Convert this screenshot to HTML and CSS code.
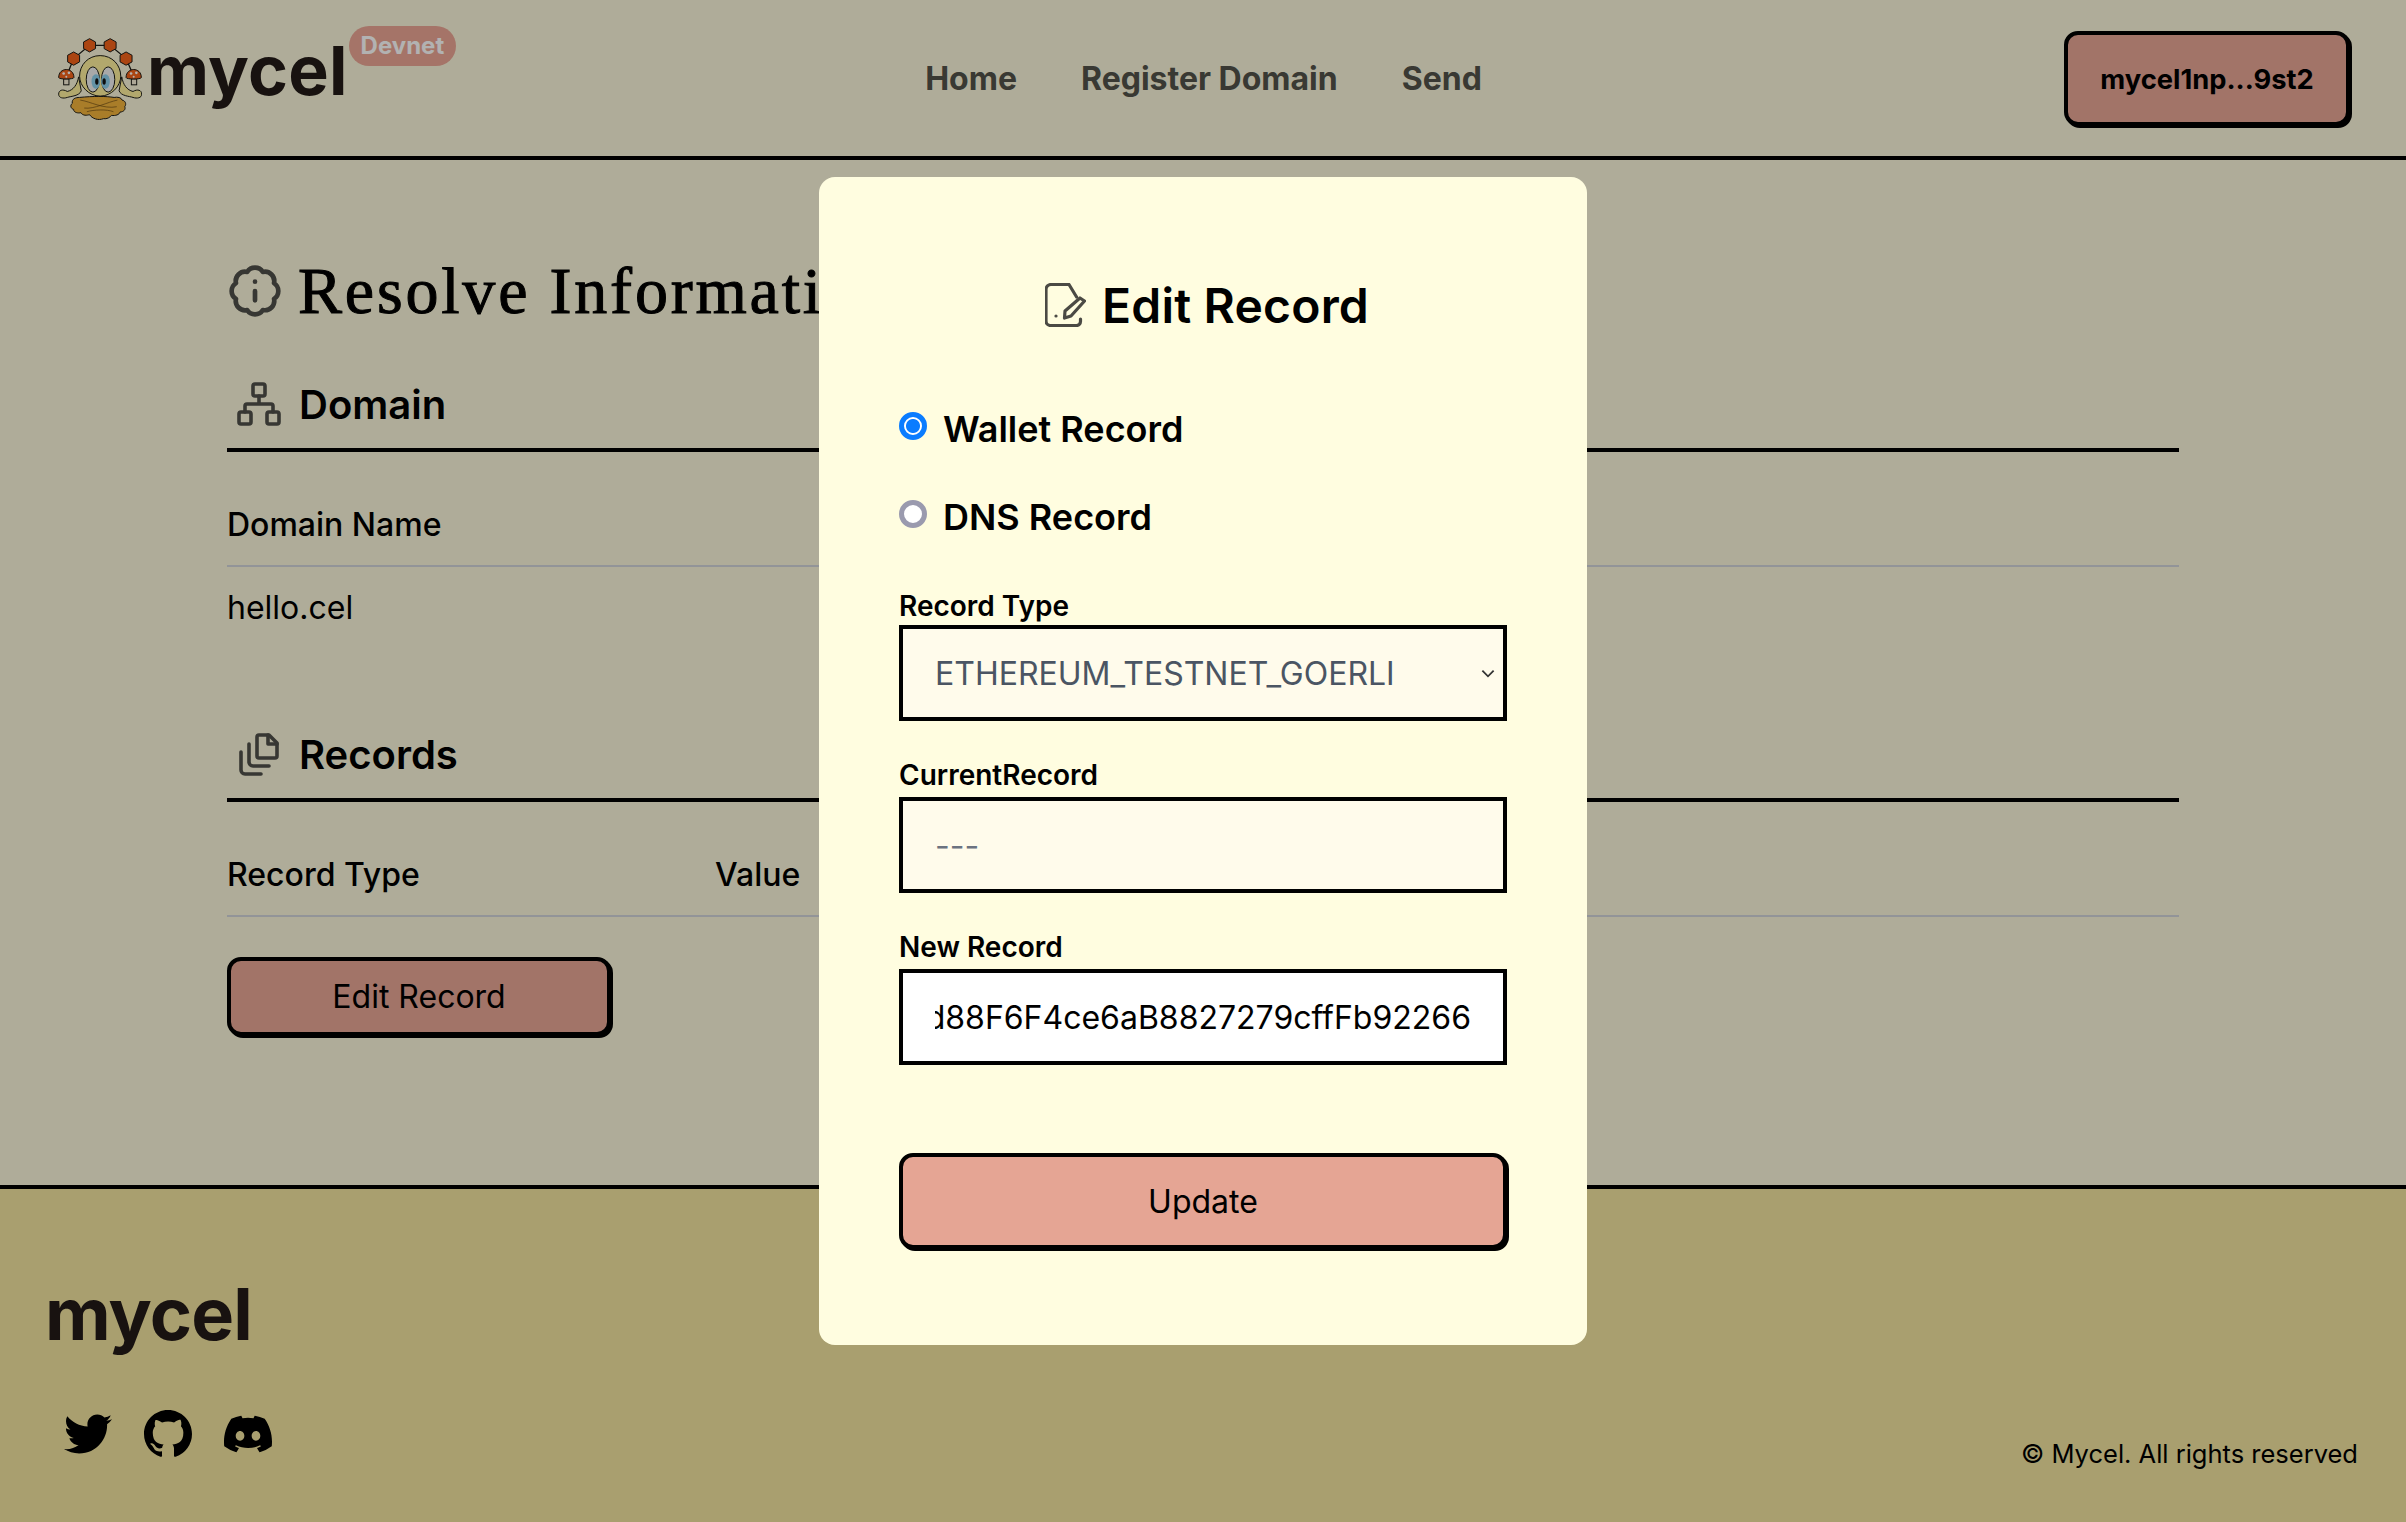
FILE: index.html
```html
<!DOCTYPE html>
<html lang="en">
<head>
<meta charset="utf-8">
<title>Mycel</title>
<link rel="stylesheet" href="styles.css">
</head>
<body>
<header class="site-header">
  <a class="brand" href="#">
    <svg class="mascot" viewBox="50 50 256 256" aria-hidden="true">
      <path class="m-line" d="M80 165 100 115 148 75H210L258 115 280 165"/>
      <g class="m-hex">
        <path d="M148 55l18 10v20l-18 10-18-10V65z"/>
        <path d="M210 55l18 10v20l-18 10-18-10V65z"/>
        <path d="M100 95l18 10v20l-18 10-18-10v-20z"/>
        <path d="M258 95l18 10v20l-18 10-18-10v-20z"/>
      </g>
      <path class="m-body" d="M118 232c-12 0-24 4-22 18-8 6-4 16 4 18 0 10 14 12 22 10 6 10 18 8 26 6 8 12 26 18 42 12 10 2 20-4 24-10 12 2 24-2 26-10 10 0 18-8 14-16 6-8 2-18-8-20-2-8-14-10-24-8-24-4-64-4-104 0z"/>
      <path class="m-thin" d="M120 240c30 4 70 28 110 20M232 240c-30 6-70 28-100 24M140 275c20-6 60-8 80 0"/>
      <path class="m-skin" d="M115 170c-4 24-16 40-34 44-14-8-26-4-26 8s14 14 26 10 36-4 42-20zM245 170c4 24 16 40 34 44 14-8 26-4 26 8s-14 14-26 10-36-4-42-20z"/>
      <path class="m-skin" d="M180 106c-36 0-62 28-62 62 0 30 28 60 62 60s62-30 62-60c0-34-26-62-62-62z"/>
      <ellipse class="m-eye" cx="158" cy="178" rx="20" ry="38"/>
      <ellipse class="m-eye" cx="204" cy="178" rx="20" ry="38"/>
      <ellipse class="m-iris" cx="167" cy="184" rx="13" ry="22"/>
      <ellipse class="m-iris" cx="196" cy="184" rx="13" ry="22"/>
      <ellipse class="m-pupil" cx="170" cy="184" rx="5" ry="10"/>
      <ellipse class="m-pupil" cx="192" cy="184" rx="5" ry="10"/>
      <g class="m-stem">
        <rect x="70" y="176" width="16" height="18"/>
        <rect x="274" y="176" width="16" height="18"/>
      </g>
      <g class="m-hex">
        <path d="M55 172c0-32 46-32 46 0 0 6-46 6-46 0z"/>
        <path d="M258 172c0-32 46-32 46 0 0 6-46 6-46 0z"/>
      </g>
      <g class="m-spot">
        <circle cx="70" cy="160" r="4"/><circle cx="86" cy="158" r="4"/><circle cx="78" cy="170" r="3"/>
        <circle cx="273" cy="160" r="4"/><circle cx="289" cy="158" r="4"/><circle cx="281" cy="170" r="3"/>
      </g>
    </svg>
    <span class="wordmark">mycel</span>
    <span class="badge">Devnet</span>
  </a>
  <nav class="main-nav">
    <a href="#">Home</a>
    <a href="#">Register Domain</a>
    <a href="#">Send</a>
  </nav>
  <div class="wallet-wrap">
    <button class="btn btn-wallet" type="button">mycel1np...9st2</button>
  </div>
</header>

<main class="content">
  <h1 class="page-title">
    <svg class="icon icon-title" viewBox="0 0 24 24" aria-hidden="true">
      <path d="M3.85 8.62a4 4 0 0 1 4.78-4.77 4 4 0 0 1 6.74 0 4 4 0 0 1 4.78 4.78 4 4 0 0 1 0 6.74 4 4 0 0 1-4.77 4.78 4 4 0 0 1-6.75 0 4 4 0 0 1-4.78-4.77 4 4 0 0 1 0-6.76Z"/>
      <path d="M12 16v-4M12 8h.01"/>
    </svg>
    <span>Resolve Information</span>
  </h1>

  <section>
    <h2 class="section-head">
      <svg class="icon icon-section" viewBox="0 0 24 24" aria-hidden="true">
        <rect x="16" y="16" width="6" height="6" rx="1"/>
        <rect x="2" y="16" width="6" height="6" rx="1"/>
        <rect x="9" y="2" width="6" height="6" rx="1"/>
        <path d="M5 16v-3a1 1 0 0 1 1-1h12a1 1 0 0 1 1 1v3M12 12V8"/>
      </svg>
      <span>Domain</span>
    </h2>
    <table class="data-table">
      <thead><tr><th>Domain Name</th><th></th><th></th><th></th></tr></thead>
      <tbody><tr><td>hello.cel</td><td></td><td></td><td></td></tr></tbody>
    </table>
  </section>

  <section class="section-records">
    <h2 class="section-head">
      <svg class="icon icon-section" viewBox="0 0 24 24" aria-hidden="true">
        <path d="M12 2.5h5l4 4v6.5a1 1 0 0 1-1 1h-8a1 1 0 0 1-1-1V3.500a1 1 0 0 1 1-1z"/>
        <path d="M16.500 2.500v4.500H21"/>
        <path d="M7 7v9a2 2 0 0 0 2 2h8M3 11v9a2 2 0 0 0 2 2h8"/>
      </svg>
      <span>Records</span>
    </h2>
    <table class="data-table">
      <thead><tr><th>Record Type</th><th>Value</th><th></th><th></th></tr></thead>
    </table>
    <button class="btn btn-edit" type="button">Edit Record</button>
  </section>
</main>

<footer class="site-footer">
  <div class="footer-main">
    <span class="wordmark wordmark-footer">mycel</span>
    <div class="socials">
      <a href="#" aria-label="Twitter"><svg viewBox="0 0 512 512"><path d="M459.37 151.716c.325 4.548.325 9.097.325 13.645 0 138.72-105.583 298.558-298.558 298.558-59.452 0-114.68-17.219-161.137-47.106 8.447.974 16.568 1.299 25.34 1.299 49.055 0 94.213-16.568 130.274-44.832-46.132-.975-84.792-31.188-98.112-72.772 6.498.974 12.995 1.624 19.818 1.624 9.421 0 18.843-1.3 27.614-3.573-48.081-9.747-84.143-51.98-84.143-102.985v-1.299c13.969 7.797 30.214 12.67 47.431 13.319-28.264-18.843-46.781-51.005-46.781-87.391 0-19.492 5.197-37.36 14.294-52.954 51.655 63.675 129.3 105.258 216.365 109.807-1.624-7.797-2.599-15.918-2.599-24.04 0-57.828 46.782-104.934 104.934-104.934 30.213 0 57.502 12.67 76.67 33.137 23.715-4.548 46.456-13.32 66.599-25.34-7.798 24.366-24.366 44.833-46.132 57.827 21.117-2.273 41.584-8.122 60.426-16.243-14.292 20.791-32.161 39.308-52.628 54.253z"/></svg></a>
      <a href="#" aria-label="GitHub"><svg viewBox="0 0 16 16"><path d="M8 0C3.58 0 0 3.58 0 8c0 3.54 2.29 6.53 5.47 7.59.4.07.55-.17.55-.38 0-.19-.01-.82-.01-1.49-2.01.37-2.53-.49-2.69-.94-.09-.23-.48-.94-.82-1.13-.28-.15-.68-.52-.01-.53.63-.01 1.08.58 1.23.82.72 1.21 1.87.87 2.33.66.07-.52.28-.87.51-1.07-1.78-.2-3.64-.89-3.64-3.95 0-.87.31-1.59.82-2.15-.08-.2-.36-1.02.08-2.12 0 0 .67-.21 2.2.82.64-.18 1.32-.27 2-.27.68 0 1.36.09 2 .27 1.53-1.04 2.2-.82 2.2-.82.44 1.1.16 1.92.08 2.12.51.56.82 1.27.82 2.15 0 3.07-1.87 3.75-3.65 3.95.29.25.54.73.54 1.48 0 1.07-.01 1.93-.01 2.2 0 .21.15.46.55.38A8.013 8.013 0 0016 8c0-4.42-3.58-8-8-8z"/></svg></a>
      <a href="#" aria-label="Discord"><svg viewBox="0 0 16 16"><path d="M13.545 2.907a13.227 13.227 0 0 0-3.257-1.011.05.05 0 0 0-.052.025c-.141.25-.297.577-.406.833a12.19 12.19 0 0 0-3.658 0 8.258 8.258 0 0 0-.412-.833.051.051 0 0 0-.052-.025c-1.125.194-2.22.534-3.257 1.011a.041.041 0 0 0-.021.018C.356 6.024-.213 9.047.066 12.032c.001.014.01.028.021.037a13.276 13.276 0 0 0 3.995 2.02.05.05 0 0 0 .056-.019c.308-.42.582-.863.818-1.329a.05.05 0 0 0-.01-.059.051.051 0 0 0-.018-.011 8.875 8.875 0 0 1-1.248-.595.05.05 0 0 1-.02-.066.051.051 0 0 1 .015-.019c.084-.063.168-.129.248-.195a.05.05 0 0 1 .051-.007c2.619 1.196 5.454 1.196 8.041 0a.052.052 0 0 1 .053.007c.08.066.164.132.248.195a.051.051 0 0 1-.004.085 8.254 8.254 0 0 1-1.249.594.05.05 0 0 0-.03.03.052.052 0 0 0 .003.041c.24.465.515.909.817 1.329a.05.05 0 0 0 .056.019 13.235 13.235 0 0 0 4.001-2.02.049.049 0 0 0 .021-.037c.334-3.451-.559-6.449-2.366-9.106a.034.034 0 0 0-.02-.019Zm-8.198 7.307c-.789 0-1.438-.724-1.438-1.612 0-.889.637-1.613 1.438-1.613.807 0 1.45.73 1.438 1.613 0 .888-.637 1.612-1.438 1.612Zm5.316 0c-.788 0-1.438-.724-1.438-1.612 0-.889.637-1.613 1.438-1.613.807 0 1.451.73 1.438 1.613 0 .888-.631 1.612-1.438 1.612Z"/></svg></a>
    </div>
  </div>
  <p class="copyright">© Mycel. All rights reserved</p>
</footer>

<div class="backdrop">
  <form class="modal">
    <h2 class="modal-title">
      <svg class="icon-edit" viewBox="0 0 41 44" aria-hidden="true">
        <path d="M31.600 14 24 1.500H6a5 5 0 0 0-5 5V38a4.500 4.500 0 0 0 4.500 4.500h26a4 4 0 0 0 4-4V36"/>
        <path d="M35 15l4.500 3-13.500 15-6.500 2 .5-7z"/>
        <path d="M11 33h.01"/>
      </svg>
      <span>Edit Record</span>
    </h2>
    <div class="radio-group">
      <label class="radio-row"><input type="radio" name="kind" checked><span>Wallet Record</span></label>
      <label class="radio-row"><input type="radio" name="kind"><span>DNS Record</span></label>
    </div>
    <div class="field">
      <label class="field-label" for="record-type">Record Type</label>
      <div class="select-wrap">
        <select class="control control-select" id="record-type">
          <option>ETHEREUM_TESTNET_GOERLI</option>
        </select>
        <svg class="chevron" viewBox="0 0 12 8" aria-hidden="true"><path d="M1 1.500l5 5 5-5"/></svg>
      </div>
    </div>
    <div class="field">
      <label class="field-label" for="current">CurrentRecord</label>
      <input class="control control-readonly" id="current" type="text" placeholder="---" readonly>
    </div>
    <div class="field">
      <label class="field-label" for="new-record">New Record</label>
      <input class="control control-live" id="new-record" type="text" dir="rtl" value="0xE3b1C5a9f27d88F6F4ce6aB8827279cffFb92266">
    </div>
    <button class="btn btn-update" type="button">Update</button>
  </form>
</div>
</body>
</html>
```
FILE: styles.css
```css
* { box-sizing: border-box; }
html, body { margin: 0; height: 100%; }
body {
  display: flex;
  flex-direction: column;
  min-height: 1522px;
  overflow: hidden;
  background: #fbf7db;
  color: #000;
  font-family: Inter, "Liberation Sans", sans-serif;
}
a { color: inherit; text-decoration: none; }

/* Header */
.site-header {
  display: grid;
  grid-template-columns: 1fr auto 1fr;
  align-items: center;
  height: 160px;
  padding: 0 56px 0 57px;
  border-bottom: 4px solid #000;
}
.brand { display: flex; align-items: flex-start; height: 96px; }
.mascot { width: 85px; height: 85px; margin-top: 7px; flex: none; }
.m-line { fill: none; stroke: #1c1c18; stroke-width: 4; }
.m-hex path { fill: #f5641a; stroke: #1c1c18; stroke-width: 3; }
.m-body { fill: #f2b33c; stroke: #1c1c18; stroke-width: 3; }
.m-thin { fill: none; stroke: #6d4c14; stroke-width: 2; }
.m-skin { fill: #fff19c; stroke: #1c1c18; stroke-width: 3; }
.m-eye { fill: #f2f2f2; stroke: #1c1c18; stroke-width: 3; }
.m-iris { fill: #8fd2ee; }
.m-pupil { fill: #141414; }
.m-stem rect { fill: #f8efd8; stroke: #1c1c18; stroke-width: 3; }
.m-spot circle { fill: #fff; }
.wordmark {
  font-family: Inter, "Noto Sans", sans-serif;
  font-weight: 700;
  font-size: 68px;
  line-height: 76px;
  color: #231a17;
  letter-spacing: .2px;
}
.brand .wordmark { margin: 2px 0 0 5px; }
.badge {
  margin: -4px 0 0 1px;
  padding: 0 12px;
  height: 40px;
  line-height: 40px;
  border-radius: 20px;
  background: #eca796;
  color: #fff;
  font-family: Inter, sans-serif;
  font-size: 24px;
  font-weight: 700;
}
.main-nav { display: flex; gap: 64px; padding-top: 2px; }
.main-nav a { font-size: 32px; font-weight: 700; line-height: 48px; color: #525249; }
.wallet-wrap { display: flex; justify-content: flex-end; }

/* Buttons */
.btn {
  border: 4px solid #000;
  border-radius: 14px;
  box-shadow: 2px 2px 0 #000;
  font-family: Inter, sans-serif;
  color: #000;
  background: #e8a796;
  cursor: pointer;
}
.btn-wallet { width: 286px; height: 95px; padding-top: 3px; font-size: 27.3px; font-weight: 700; }
.btn-edit { display: block; width: 384px; height: 79px; margin-top: 40px; font-size: 32px; font-weight: 400; }
.btn-update { display: block; width: 608px; height: 96px; margin-top: 88px; font-size: 32px; font-weight: 400; background: #e5a594; }

/* Content */
.content { flex: 1; padding: 99px 227px 0; }
.page-title {
  display: flex;
  align-items: center;
  gap: 15px;
  margin: 0;
  height: 64px;
  font-family: "Liberation Serif", serif;
  font-size: 66px;
  font-weight: 400;
  letter-spacing: 2.8px;
  -webkit-text-stroke: 1px #000;
  white-space: nowrap;
}
.icon { fill: none; stroke: #4f4f49; stroke-width: 2; stroke-linecap: round; stroke-linejoin: round; }
.icon-title { width: 56px; height: 56px; flex: none; }
.section-head {
  display: flex;
  align-items: center;
  height: 80px;
  margin: 49px 0 0;
  padding-bottom: 12px;
  border-bottom: 4px solid #000;
  font-size: 40px;
  font-weight: 600;
  gap: 16px;
}
.icon-section { width: 48px; height: 48px; margin-left: 8px; stroke-width: 1.800; flex: none; }
.section-records { margin-top: 74px; }
.section-records .section-head { margin-top: 0; }
.data-table { width: 100%; margin-top: 34px; border-collapse: collapse; table-layout: fixed; }
.data-table th {
  height: 80px;
  padding: 0 0 2px;
  text-align: left;
  font-size: 32px;
  font-weight: 500;
  border-bottom: 2px solid #d2d4da;
}
.data-table td { height: 82px; padding: 0; font-size: 32px; font-weight: 400; }

/* Footer */
.site-footer {
  display: flex;
  justify-content: space-between;
  align-items: flex-end;
  height: 337px;
  padding: 0 48px 48px;
  border-top: 4px solid #000;
  background: #f2e4a0;
}
.footer-main { display: flex; flex-direction: column; }
.wordmark-footer { font-size: 72px; line-height: 80px; margin: 1px 0 56px -3px; letter-spacing: -.9px; }
.socials { display: flex; margin-bottom: 16px; }
.socials a { display: flex; justify-content: center; width: 80px; }
.socials svg { width: 48px; height: 48px; fill: #000; }
.copyright { margin: 0; font-size: 25.5px; line-height: 40px; color: #000; }

/* Modal */
.backdrop {
  position: fixed;
  inset: 0;
  display: flex;
  align-items: center;
  justify-content: center;
  background: rgba(0, 0, 0, .3);
}
.modal {
  width: 768px;
  height: 1168px;
  padding: 96px 80px 94px;
  border-radius: 16px;
  background: #fffde0;
}
.modal-title {
  display: flex;
  align-items: center;
  justify-content: center;
  gap: 16px;
  height: 64px;
  margin: 0;
  padding-left: 8px;
  font-size: 48px;
  font-weight: 600;
  letter-spacing: .2px;
  color: #000;
}
.icon-edit { width: 41px; height: 44px; fill: none; stroke: #4b4a44; stroke-width: 3.200; stroke-linejoin: round; stroke-linecap: round; }
.radio-group { display: flex; flex-direction: column; gap: 28px; margin-top: 61px; }
.radio-row { display: flex; align-items: center; gap: 16px; height: 60px; font-size: 36px; font-weight: 600; color: #000; }
.radio-row span { padding-top: 1px; }
.radio-row input {
  appearance: none;
  width: 28px;
  height: 28px;
  margin: 0 0 4px;
  border: 5px solid #9a9aae;
  border-radius: 50%;
  background: #fff;
}
.radio-row input:checked {
  border-color: #0a7cff;
  background: radial-gradient(circle, #0a7cff 0 6.5px, #fff 7.5px);
}
.field { margin-top: 36px; }
.radio-group + .field { margin-top: 39px; }
.field-label { display: block; height: 40px; font-size: 28px; font-weight: 600; line-height: 36px; color: #000; }
.radio-group + .field .field-label { line-height: 43px; }
.select-wrap { position: relative; }
.control {
  display: block;
  width: 100%;
  height: 96px;
  padding: 0 32px;
  border: 4px solid #000;
  border-radius: 0;
  outline: 0;
  font-family: Inter, sans-serif;
  font-size: 32px;
  background: #fffbeb;
  color: #000;
}
.control-select { appearance: none; color: #4b5563; }
.control-readonly::placeholder { color: #6b7280; opacity: 1; }
.control-live { background: #fff; }
.chevron {
  position: absolute;
  right: 12px;
  top: 44px;
  width: 14px;
  height: 9px;
  fill: none;
  stroke: #333;
  stroke-width: 1.600;
}
```
